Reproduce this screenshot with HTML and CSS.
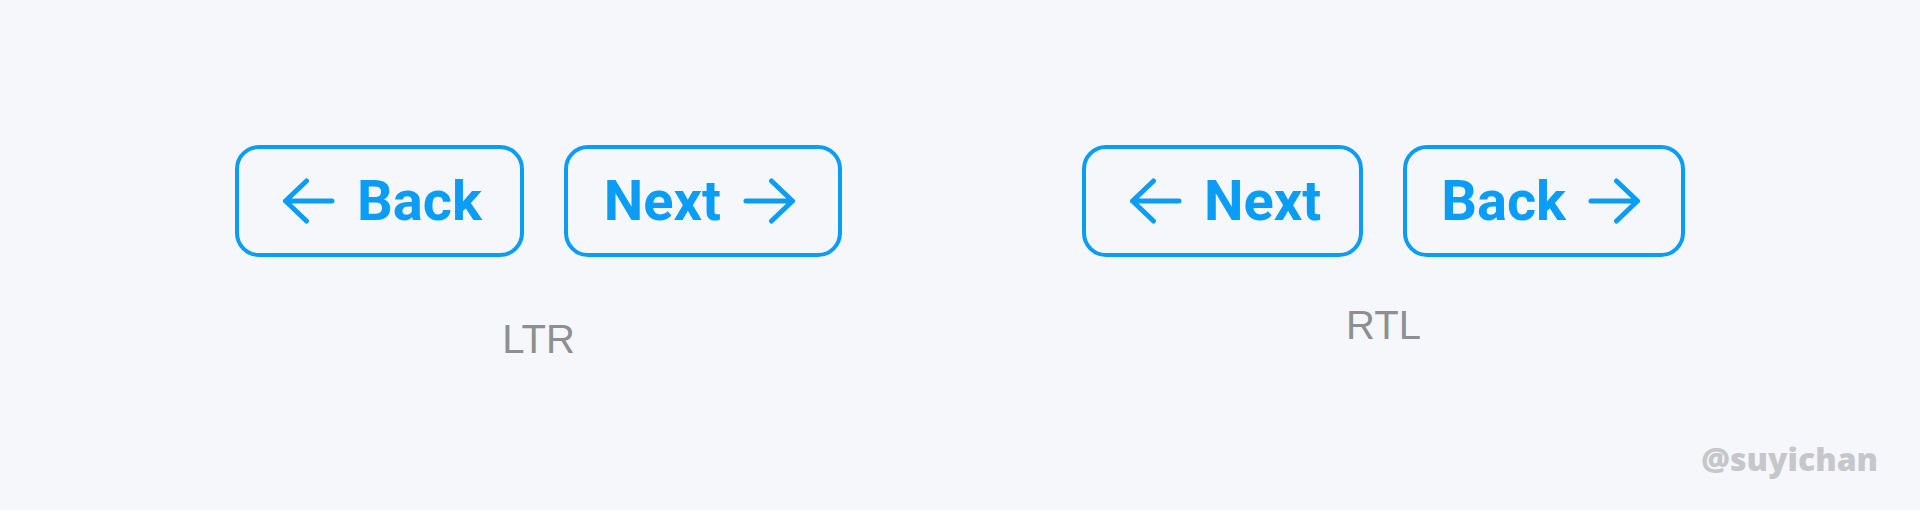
FILE: index.html
```html
<!DOCTYPE html>
<html lang="en">
<head>
<meta charset="utf-8">
<title>LTR / RTL buttons</title>
<link rel="stylesheet" href="styles.css">
</head>
<body>
<main class="stage">
  <section class="group">
    <div class="row">
      <button class="btn btn--lead" type="button">
        <svg class="arrow" viewBox="0 0 52 46" width="52" height="46" aria-hidden="true"><path d="M2.5 23H49M23.5 3L2.5 23L23.5 43"/></svg>
        <span class="label">Back</span>
      </button>
      <button class="btn btn--trail" type="button">
        <span class="label">Next</span>
        <svg class="arrow" viewBox="0 0 52 46" width="52" height="46" aria-hidden="true"><path d="M49.5 23H3M28.5 3L49.5 23L28.5 43"/></svg>
      </button>
    </div>
    <p class="caption caption--ltr">LTR</p>
  </section>
  <section class="group">
    <div class="row">
      <button class="btn btn--lead" type="button">
        <svg class="arrow" viewBox="0 0 52 46" width="52" height="46" aria-hidden="true"><path d="M2.5 23H49M23.5 3L2.5 23L23.5 43"/></svg>
        <span class="label">Next</span>
      </button>
      <button class="btn btn--trail btn--snug" type="button">
        <span class="label">Back</span>
        <svg class="arrow" viewBox="0 0 52 46" width="52" height="46" aria-hidden="true"><path d="M49.5 23H3M28.5 3L49.5 23L28.5 43"/></svg>
      </button>
    </div>
    <p class="caption caption--rtl">RTL</p>
  </section>
</main>
<div class="watermark">@suyichan</div>
</body>
</html>
```
FILE: styles.css
```css
html, body {
  margin: 0;
  padding: 0;
}
body {
  width: 1920px;
  height: 510px;
  background: #f6f7fb;
  position: relative;
  overflow: hidden;
  font-family: "Liberation Sans", Arial, sans-serif;
}
.stage {
  display: flex;
  justify-content: center;
  align-items: flex-start;
  gap: 240px;
  padding-top: 145px;
}
.group {
  display: flex;
  flex-direction: column;
  align-items: center;
}
.row {
  display: flex;
  gap: 40px;
}
.btn {
  box-sizing: border-box;
  height: 112px;
  display: inline-flex;
  align-items: center;
  gap: 22px;
  margin: 0;
  border: 4px solid #0a9df6;
  border-radius: 24px;
  background: transparent;
  color: #0a9df6;
  font-family: Roboto, "Liberation Sans", sans-serif;
  font-weight: 700;
  font-size: 56px;
  line-height: 1;
  cursor: pointer;
}
.btn--lead {
  padding: 0 38px 0 44px;
}
.btn--trail {
  padding: 0 43px 0 36px;
}
.btn--snug {
  padding: 0 41px 0 34px;
}
.label {
  display: block;
}
.arrow {
  display: block;
  flex: none;
  fill: none;
  stroke: #0a9df6;
  stroke-width: 5;
  stroke-linecap: round;
  stroke-linejoin: round;
}
.caption {
  margin: 0;
  font-family: "Liberation Sans", Arial, sans-serif;
  font-size: 40px;
  line-height: 1;
  color: #8e8e93;
}
.caption--ltr {
  margin-top: 62px;
}
.caption--rtl {
  margin-top: 48px;
}
.watermark {
  position: absolute;
  right: 42px;
  bottom: 35px;
  font-family: "Open Sans", sans-serif;
  font-weight: 800;
  font-size: 32px;
  line-height: 1;
  color: #c6c7cb;
}
```
